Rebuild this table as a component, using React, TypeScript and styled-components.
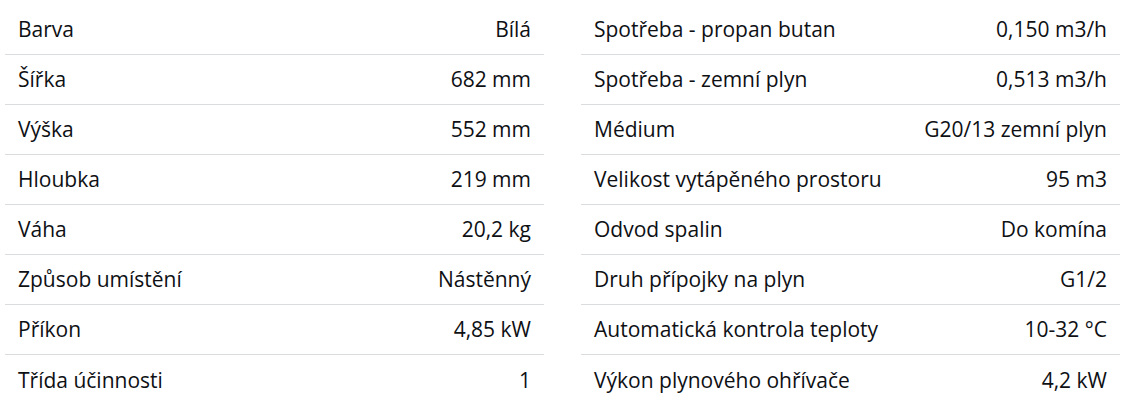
import React from 'react';
import styled, { createGlobalStyle } from 'styled-components';

type Param = [string, string];

const left: Param[] = [
  ['Barva', 'Bílá'],
  ['Šířka', '682 mm'],
  ['Výška', '552 mm'],
  ['Hloubka', '219 mm'],
  ['Váha', '20,2 kg'],
  ['Způsob umístění', 'Nástěnný'],
  ['Příkon', '4,85 kW'],
  ['Třída účinnosti', '1'],
];

const right: Param[] = [
  ['Spotřeba - propan butan', '0,150 m3/h'],
  ['Spotřeba - zemní plyn', '0,513 m3/h'],
  ['Médium', 'G20/13 zemní plyn'],
  ['Velikost vytápěného prostoru', '95 m3'],
  ['Odvod spalin', 'Do komína'],
  ['Druh přípojky na plyn', 'G1/2'],
  ['Automatická kontrola teploty', '10-32 °C'],
  ['Výkon plynového ohřívače', '4,2 kW'],
];

const GlobalStyle = createGlobalStyle`
  *, *::before, *::after {
    box-sizing: border-box;
  }

  body {
    margin: 0;
    background: #fff;
    font-family: "Open Sans", "Noto Sans", sans-serif;
    color: #0e1014;
  }
`;

const ParamTable: React.FC<{ rows: Param[] }> = ({ rows }) => (
  <Column>
    {rows.map(([label, value]) => (
      <Row key={label}>
        <Label>{label}</Label>
        <Value>{value}</Value>
      </Row>
    ))}
  </Column>
);

export default function App() {
  return (
    <>
      <GlobalStyle />
      <Wrapper>
        <ParamTable rows={left} />
        <ParamTable rows={right} />
      </Wrapper>
    </>
  );
}

const Wrapper = styled.div`
  display: grid;
  grid-template-columns: 539px 539px;
  column-gap: 37px;
  padding: 5px 8px 0 5px;
`;

const Column = styled.div`
  display: flex;
  flex-direction: column;
`;

const Row = styled.div`
  display: flex;
  align-items: center;
  justify-content: space-between;
  height: 50px;
  padding: 0 13px;
  border-bottom: 1px solid #d9dde0;
  font-size: 21px;
  line-height: 1;

  &:last-child {
    border-bottom: none;
  }
`;

const Label = styled.span``;

const Value = styled.span`
  text-align: right;
`;
